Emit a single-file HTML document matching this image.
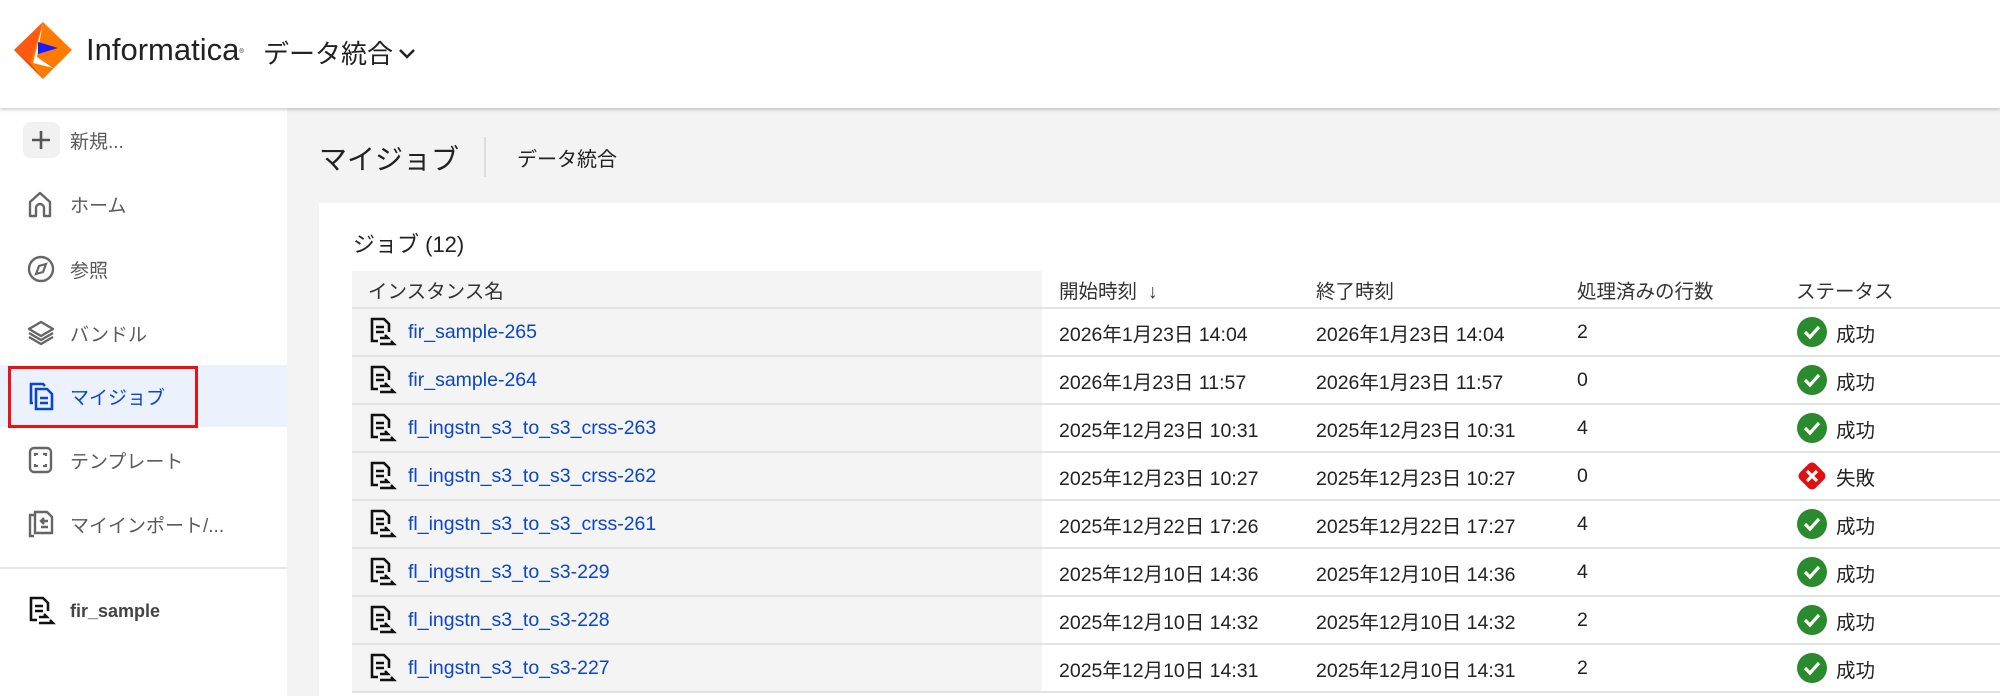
<!DOCTYPE html>
<html><head><meta charset="utf-8">
<style>
*{margin:0;padding:0;box-sizing:border-box}
body{width:2000px;height:696px;overflow:hidden;background:#f3f3f3;font-family:"Liberation Sans","Noto Sans CJK JP",sans-serif;color:#222;position:relative}
.hdr{position:absolute;left:0;top:0;width:2000px;height:108px;background:#fff;box-shadow:0 2px 3px rgba(0,0,0,.18);z-index:5}
.side{position:absolute;left:0;top:108px;width:287px;height:588px;background:#fff}
.abs{position:absolute;white-space:nowrap}
.nav{position:absolute;left:0;width:287px;height:62px;display:flex;align-items:center;font-size:19px;color:#5a5a5a}
.nav svg{position:absolute;left:27px}
.nav span{position:absolute;left:70px}
.card{position:absolute;left:319px;top:203px;width:1681px;height:493px;background:#fff}
.tbl{position:absolute;left:352px;top:271px;width:1648px;font-size:19.5px}
.r{display:flex;height:48px;border-bottom:2px solid #e3e3e3;align-items:center;white-space:nowrap}
.r.h{height:38px;color:#333}
.r>div{height:100%;display:flex;align-items:center}
.c1{width:690px;background:#f4f4f4;padding-left:16px}
.c2{width:274px;padding-left:17px}.c3{width:261px}.c4{width:219px}.c5{gap:8px}
a{color:#0b45c8;text-decoration:none}
.ic{margin-right:10px}
</style></head><body>
<div class="hdr">
 <svg class="abs" style="left:13px;top:21px" width="60" height="60" viewBox="0 0 60 60">
  <polygon points="30,1 59,29 30,58 1,29" fill="#ff7a00"/>
  <polygon points="30,1 1,29 17,42" fill="#ff5a10"/>
  <polygon points="1,29 17,42 30,58" fill="#e24a0a"/>
  <polygon points="30,1 20,42 40,47 24,36" fill="#fff"/>
  <polygon points="25,21 45,27 25,33" fill="#1a1aff"/>
 </svg>
 <div class="abs" style="left:86px;top:32px;font-size:31px;color:#222">Informatica<span style="font-size:6px;vertical-align:middle">®</span></div>
 <div class="abs" style="left:263px;top:34px;font-size:26px;color:#222">データ統合</div>
 <svg class="abs" style="left:398px;top:48px" width="18" height="12" viewBox="0 0 18 12"><path d="M2 2l7 7 7-7" stroke="#222" stroke-width="2.5" fill="none"/></svg>
</div>
<div class="side">
 <div class="abs" style="left:23px;top:14px;width:37px;height:36px;border-radius:8px;background:#f1f1f1"></div>
 <svg class="abs" style="left:31px;top:22px" width="20" height="20" viewBox="0 0 20 20"><path d="M10 1v18M1 10h18" stroke="#555" stroke-width="2.6"/></svg>
 <div class="abs" style="left:70px;top:19px;font-size:19px;color:#5a5a5a">新規...</div>
 <div class="nav" style="top:65px"><svg width="26" height="28" viewBox="0 0 26 28"><path d="M3 26V12L13 3l10 9v14h-6v-8a4 4 0 0 0-8 0v8z" stroke="#666" stroke-width="2.4" fill="none" stroke-linejoin="round"/></svg><span>ホーム</span></div>
 <div class="nav" style="top:130px"><svg width="28" height="28" viewBox="0 0 28 28"><circle cx="14" cy="14" r="12" stroke="#666" stroke-width="2.4" fill="none"/><path d="M9 19l3-8 7-2-3 8z" stroke="#666" stroke-width="2.2" fill="none"/></svg><span>参照</span></div>
 <div class="nav" style="top:194px"><svg width="28" height="28" viewBox="0 0 28 28"><path d="M14 3L26 10 14 17 2 10z M2 14l12 7 12-7 M2 18l12 7 12-7" stroke="#666" stroke-width="2.4" fill="none" stroke-linejoin="round"/></svg><span>バンドル</span></div>
 <div class="abs" style="left:0;top:257px;width:287px;height:62px;background:#ebf1fd"></div>
 <div class="abs" style="left:8px;top:258px;width:190px;height:62px;border:3px solid #ee1111"></div>
 <div class="nav" style="top:257px;color:#0b45c8"><svg width="28" height="30" viewBox="0 0 28 30"><path d="M6 22H4V3h12l2 2" stroke="#0b45c8" stroke-width="2.6" fill="none"/><path d="M9 8h11l5 5v15H9z M13 17h8M13 22h8" stroke="#0b45c8" stroke-width="2.6" fill="none"/></svg><span>マイジョブ</span></div>
 <div class="nav" style="top:321px"><svg width="28" height="30" viewBox="0 0 28 30"><rect x="3" y="3" width="21" height="24" rx="4" stroke="#666" stroke-width="2.4" fill="none"/><path d="M8 11V9h3M16 9h3v2M8 19v2h3M16 21h3v-2" stroke="#666" stroke-width="2.2" fill="none"/></svg><span>テンプレート</span></div>
 <div class="nav" style="top:385px"><svg width="28" height="30" viewBox="0 0 28 30"><path d="M7 27H3V6h4 M8 24V3h12l5 5v16z M14 12h7M17 9l-3 3 3 3M14 18h7" stroke="#666" stroke-width="2.4" fill="none"/></svg><span>マイインポート/...</span></div>
 <div class="abs" style="left:0;top:459px;width:287px;height:2px;background:#e6e6e6"></div>
 <div class="nav" style="top:472px;color:#444;font-weight:bold;font-size:18px"><svg width="30" height="32" viewBox="0 0 30 32"><path d="M10 25H4V3h12l5 5v8 M8 11h8M8 16h8" stroke="#111" stroke-width="2.6" fill="none"/><path d="M12 22h8l-3-3 M12 28h14l-3-3" stroke="#111" stroke-width="2.4" fill="none"/></svg><span style="color:#444">fir_sample</span></div>
</div>
<div class="abs" style="left:319px;top:138px;font-size:28px;color:#222">マイジョブ</div>
<div class="abs" style="left:484px;top:137px;width:2px;height:40px;background:#ddd"></div>
<div class="abs" style="left:517px;top:143px;font-size:20px;color:#222">データ統合</div>
<div class="card"></div>
<div class="abs" style="left:353px;top:227px;font-size:22px;color:#222">ジョブ (12)</div>
<svg width="0" height="0" style="position:absolute"><defs><g id="ji"><path d="M10 25H4V3h12l5 5v8 M8 11h8M8 16h8" stroke="#111" stroke-width="2.6" fill="none"/><path d="M12 22h8l-3-3 M12 28h14l-3-3" stroke="#111" stroke-width="2.4" fill="none"/></g>
<g id="ok"><circle cx="16" cy="16" r="15" fill="#2a8a2e"/><path d="M9 16l5 5 9-10" stroke="#fff" stroke-width="3.2" fill="none"/></g>
<g id="ng"><rect x="5" y="5" width="22" height="22" rx="5" transform="rotate(45 16 16)" fill="#e01010"/><path d="M11 11l10 10M21 11l-10 10" stroke="#fff" stroke-width="3.2"/></g></defs></svg>
<div class="tbl">
<div class="r h"><div class="c1">インスタンス名</div><div class="c2">開始時刻 &nbsp;↓</div><div class="c3">終了時刻</div><div class="c4">処理済みの行数</div><div class="c5">ステータス</div></div>
<div class="r"><div class="c1"><svg class="ic" width="30" height="32"><use href="#ji"/></svg><a>fir_sample-265</a></div><div class="c2">2026年1月23日 14:04</div><div class="c3">2026年1月23日 14:04</div><div class="c4">2</div><div class="c5"><svg width="32" height="32"><use href="#ok"/></svg>成功</div></div>
<div class="r"><div class="c1"><svg class="ic" width="30" height="32"><use href="#ji"/></svg><a>fir_sample-264</a></div><div class="c2">2026年1月23日 11:57</div><div class="c3">2026年1月23日 11:57</div><div class="c4">0</div><div class="c5"><svg width="32" height="32"><use href="#ok"/></svg>成功</div></div>
<div class="r"><div class="c1"><svg class="ic" width="30" height="32"><use href="#ji"/></svg><a>fl_ingstn_s3_to_s3_crss-263</a></div><div class="c2">2025年12月23日 10:31</div><div class="c3">2025年12月23日 10:31</div><div class="c4">4</div><div class="c5"><svg width="32" height="32"><use href="#ok"/></svg>成功</div></div>
<div class="r"><div class="c1"><svg class="ic" width="30" height="32"><use href="#ji"/></svg><a>fl_ingstn_s3_to_s3_crss-262</a></div><div class="c2">2025年12月23日 10:27</div><div class="c3">2025年12月23日 10:27</div><div class="c4">0</div><div class="c5"><svg width="32" height="32"><use href="#ng"/></svg>失敗</div></div>
<div class="r"><div class="c1"><svg class="ic" width="30" height="32"><use href="#ji"/></svg><a>fl_ingstn_s3_to_s3_crss-261</a></div><div class="c2">2025年12月22日 17:26</div><div class="c3">2025年12月22日 17:27</div><div class="c4">4</div><div class="c5"><svg width="32" height="32"><use href="#ok"/></svg>成功</div></div>
<div class="r"><div class="c1"><svg class="ic" width="30" height="32"><use href="#ji"/></svg><a>fl_ingstn_s3_to_s3-229</a></div><div class="c2">2025年12月10日 14:36</div><div class="c3">2025年12月10日 14:36</div><div class="c4">4</div><div class="c5"><svg width="32" height="32"><use href="#ok"/></svg>成功</div></div>
<div class="r"><div class="c1"><svg class="ic" width="30" height="32"><use href="#ji"/></svg><a>fl_ingstn_s3_to_s3-228</a></div><div class="c2">2025年12月10日 14:32</div><div class="c3">2025年12月10日 14:32</div><div class="c4">2</div><div class="c5"><svg width="32" height="32"><use href="#ok"/></svg>成功</div></div>
<div class="r"><div class="c1"><svg class="ic" width="30" height="32"><use href="#ji"/></svg><a>fl_ingstn_s3_to_s3-227</a></div><div class="c2">2025年12月10日 14:31</div><div class="c3">2025年12月10日 14:31</div><div class="c4">2</div><div class="c5"><svg width="32" height="32"><use href="#ok"/></svg>成功</div></div>
</div>
</body></html>
